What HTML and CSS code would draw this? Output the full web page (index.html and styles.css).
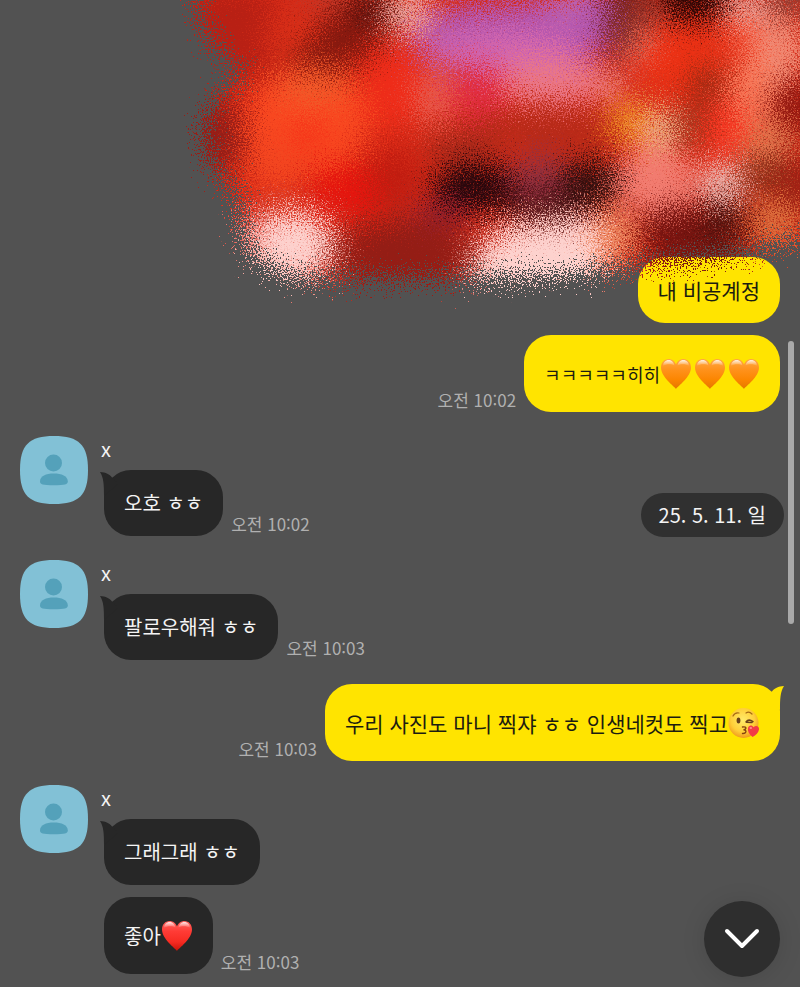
FILE: index.html
```html
<!DOCTYPE html>
<html lang="ko">
<head>
<meta charset="utf-8">
<meta name="viewport" content="width=device-width, initial-scale=1">
<title>채팅</title>
<link rel="stylesheet" href="styles.css">
</head>
<body>
<svg class="defs" aria-hidden="true">
  <defs>
    <linearGradient id="orange" x1="0" y1="0" x2="0" y2="1"><stop offset="0" stop-color="#ffa844"/><stop offset=".35" stop-color="#ff921c"/><stop offset=".7" stop-color="#fb8500"/><stop offset="1" stop-color="#e47800"/></linearGradient>
    <linearGradient id="red" x1="0" y1="0" x2="0" y2="1"><stop offset="0" stop-color="#ff6560"/><stop offset=".35" stop-color="#ff3b35"/><stop offset=".7" stop-color="#f72b22"/><stop offset="1" stop-color="#c91208"/></linearGradient>
    <linearGradient id="shine" x1="0" y1="0" x2="0" y2="1"><stop offset="0" stop-color="#fff" stop-opacity=".85"/><stop offset="1" stop-color="#fff" stop-opacity="0"/></linearGradient>
    <radialGradient id="face" cx=".48" cy=".4" r=".6"><stop offset="0" stop-color="#ffeb6b"/><stop offset=".65" stop-color="#ffcf38"/><stop offset="1" stop-color="#f19a1c"/></radialGradient>
    <symbol id="avatar" viewBox="0 0 68 68">
      <path fill="#82c1d6" d="M34 0C59 0 68 9 68 34S59 68 34 68 0 59 0 34 9 0 34 0Z"/>
      <circle cx="33.500" cy="27" r="8.500" fill="#54a1ba"/>
      <path fill="#54a1ba" d="M20 45.500C20 40 26 37.500 33.800 37.500S47.800 40 47.800 45.500C47.800 48.500 45 49.200 33.800 49.200S20 48.500 20 45.500Z"/>
    </symbol>
    <symbol id="heart-shape" viewBox="0 0 32 32">
      <path d="M16 31C14 28 1 19 1 9.500C1 4.500 4.300 1 8.500 1C12 1 14.800 3.200 16 6.500C17.200 3.200 20 1 23.500 1C27.700 1 31 4.500 31 9.500C31 19 18 28 16 31Z"/>
    </symbol>
    <symbol id="heart-shine" viewBox="0 0 32 32">
      <path fill="url(#shine)" d="M3 8C3 4.500 5.500 2 8.700 2S14 4.500 14.500 7.500C11 5.500 6 6 3 8Z"/>
      <path fill="url(#shine)" d="M29 8C29 4.500 26.500 2 23.300 2S18 4.500 17.500 7.500C21 5.500 26 6 29 8Z"/>
    </symbol>
    <symbol id="tail" viewBox="0 0 18 24">
      <path d="M0 0C6 .4 9.500 2.200 12 5.500L18 12 4 24C4 13 3.800 6 0 0Z"/>
    </symbol>
  </defs>
</svg>

<main class="chat">
  <div class="photo">
    <svg class="scribble" viewBox="180 0 620 310" role="img" aria-label="가려진 사진">
      <defs>
        <filter id="grain" filterUnits="userSpaceOnUse" x="130" y="-50" width="720" height="380" color-interpolation-filters="sRGB">
          <feTurbulence type="fractalNoise" baseFrequency=".71" numOctaves="3" seed="7" result="noise"/>
          <feDisplacementMap in="SourceGraphic" in2="noise" scale="84" xChannelSelector="R" yChannelSelector="G"/>
          <feGaussianBlur stdDeviation=".4"/>
        </filter>
        <filter id="soft" filterUnits="userSpaceOnUse" x="100" y="-80" width="780" height="460" color-interpolation-filters="sRGB"><feGaussianBlur stdDeviation="10"/></filter>
        <clipPath id="outline"><path d="M195-40L199 12Q207 48 247 73Q212 92 203 132Q205 168 240 196L244 235Q250 262 292 276Q310 281 350 277L460 278Q560 276 625 267Q700 258 735 254L850 226V-40Z"/></clipPath>
      </defs>
      <g filter="url(#grain)">
        <g clip-path="url(#outline)">
          <path fill="#d62a17" d="M100-60H880V340H100Z"/>
          <g filter="url(#soft)">
            <ellipse cx="232" cy="35" rx="55" ry="50" fill="#b82014"/>
            <ellipse cx="292" cy="38" rx="26" ry="24" fill="#dc3018"/>
            <ellipse cx="330" cy="-5" rx="30" ry="16" fill="#c23828"/>
            <path d="M285 65L340 5 380-20 400 0 390 40 340 72Z" fill="#86190f"/>
            <ellipse cx="370" cy="7" rx="17" ry="14" fill="#4a0b08"/>
            <ellipse cx="408" cy="13" rx="24" ry="21" fill="#f1a79e"/>
            <ellipse cx="215" cy="137" rx="28" ry="42" fill="#951e17"/>
            <ellipse cx="308" cy="120" rx="62" ry="52" fill="#f84820"/>
            <ellipse cx="315" cy="87" rx="40" ry="15" fill="#f25c2a"/>
            <ellipse cx="276" cy="165" rx="32" ry="24" fill="#f34620"/>
            <ellipse cx="308" cy="135" rx="18" ry="12" fill="#f52e16"/>
            <ellipse cx="392" cy="85" rx="30" ry="44" fill="#ee2c19"/>
            <ellipse cx="350" cy="190" rx="38" ry="25" fill="#e5150e"/>
            <ellipse cx="393" cy="178" rx="24" ry="30" fill="#bf1c10"/>
            <ellipse cx="434" cy="98" rx="20" ry="28" fill="#e85a4c"/>
            <path d="M410 45Q435-5 500 4L615-15 611 45 560 75 438 68Z" fill="#b054ae"/>
            <ellipse cx="505" cy="50" rx="80" ry="19" fill="#d266ae"/>
            <ellipse cx="552" cy="82" rx="65" ry="21" fill="#eb7886"/>
            <ellipse cx="478" cy="93" rx="27" ry="26" fill="#e12c40"/>
            <ellipse cx="568" cy="6" rx="20" ry="7" fill="#cd7aba"/>
            <path d="M610-30H655L640 28 620 64 606 50Z" fill="#77201a"/>
            <ellipse cx="648" cy="15" rx="18" ry="13" fill="#a64035"/>
            <ellipse cx="694" cy="-2" rx="32" ry="23" fill="#280504"/>
            <ellipse cx="747" cy="9" rx="22" ry="17" fill="#edafa7"/>
            <ellipse cx="790" cy="-2" rx="24" ry="18" fill="#8e3c32"/>
            <ellipse cx="682" cy="60" rx="43" ry="36" fill="#ec3114"/>
            <ellipse cx="640" cy="47" rx="13" ry="14" fill="#ed8170"/>
            <ellipse cx="612" cy="86" rx="16" ry="12" fill="#ee8980"/>
            <ellipse cx="745" cy="38" rx="22" ry="18" fill="#f24e32"/>
            <ellipse cx="780" cy="52" rx="26" ry="35" fill="#f18a74"/>
            <ellipse cx="753" cy="91" rx="24" ry="32" fill="#f87a5a"/>
            <ellipse cx="706" cy="84" rx="18" ry="19" fill="#9b2a12"/>
            <ellipse cx="796" cy="108" rx="26" ry="30" fill="#93170f"/>
            <ellipse cx="555" cy="129" rx="85" ry="19" fill="#b52a18"/>
            <ellipse cx="460" cy="145" rx="37" ry="14" fill="#a6291a"/>
            <ellipse cx="630" cy="122" rx="22" ry="19" fill="#ee8a20"/>
            <ellipse cx="660" cy="130" rx="19" ry="22" fill="#f0b088"/>
            <ellipse cx="692" cy="127" rx="17" ry="20" fill="#9b3018"/>
            <ellipse cx="725" cy="130" rx="21" ry="28" fill="#f53520"/>
            <ellipse cx="768" cy="143" rx="27" ry="22" fill="#e87a50"/>
            <ellipse cx="475" cy="187" rx="44" ry="24" fill="#26070c"/>
            <ellipse cx="540" cy="181" rx="30" ry="28" fill="#93303e"/>
            <ellipse cx="590" cy="183" rx="30" ry="24" fill="#300f0e"/>
            <ellipse cx="540" cy="206" rx="45" ry="10" fill="#36070b"/>
            <ellipse cx="655" cy="181" rx="40" ry="34" fill="#f27c70"/>
            <ellipse cx="722" cy="184" rx="23" ry="22" fill="#edbab4"/>
            <ellipse cx="765" cy="175" rx="24" ry="21" fill="#8d3018"/>
            <ellipse cx="800" cy="188" rx="24" ry="35" fill="#9e2014"/>
            <ellipse cx="440" cy="213" rx="30" ry="8" fill="#92213c"/>
            <ellipse cx="405" cy="255" rx="75" ry="38" fill="#941d15"/>
            <ellipse cx="258" cy="229" rx="22" ry="16" fill="#e17770"/>
            <ellipse cx="293" cy="246" rx="41" ry="36" fill="#fdd1cd"/>
            <path d="M472 262Q490 221 525 223L597 215 607 290 470 292Z" fill="#fdd2ce"/>
            <ellipse cx="615" cy="236" rx="19" ry="27" fill="#ee8a60"/>
            <ellipse cx="690" cy="233" rx="53" ry="27" fill="#75130f"/>
            <ellipse cx="725" cy="222" rx="24" ry="19" fill="#4c100b"/>
            <ellipse cx="775" cy="222" rx="26" ry="20" fill="#df7540"/>
            <path d="M625 270L700 252 760 246 750 280H625Z" fill="#87251a"/>
          </g>
        </g>
      </g>
    </svg>
  </div>

  <section class="group mine">
    <div class="row"><p class="bubble">내 비공계정</p></div>
    <div class="row">
      <time>오전 10:02</time>
      <p class="bubble tall small"><span>ㅋㅋㅋㅋㅋ히히</span><span class="emojis" role="img" aria-label="주황색 하트 세 개">
        <svg viewBox="0 0 32 32"><use href="#heart-shape" fill="url(#orange)"/><use href="#heart-shine"/></svg>
        <svg viewBox="0 0 32 32"><use href="#heart-shape" fill="url(#orange)"/><use href="#heart-shine"/></svg>
        <svg viewBox="0 0 32 32"><use href="#heart-shape" fill="url(#orange)"/><use href="#heart-shine"/></svg></span></p>
    </div>
  </section>

  <section class="group theirs">
    <svg class="avatar" aria-hidden="true"><use href="#avatar"/></svg>
    <div class="thread">
      <h2>x</h2>
      <div class="row"><p class="bubble">오호 ㅎㅎ<svg class="tail" aria-hidden="true"><use href="#tail"/></svg></p><time>오전 10:02</time></div>
    </div>
  </section>

  <section class="group theirs">
    <svg class="avatar" aria-hidden="true"><use href="#avatar"/></svg>
    <div class="thread">
      <h2>x</h2>
      <div class="row"><p class="bubble">팔로우해줘 ㅎㅎ<svg class="tail" aria-hidden="true"><use href="#tail"/></svg></p><time>오전 10:03</time></div>
    </div>
  </section>

  <section class="group mine">
    <div class="row">
      <time>오전 10:03</time>
      <p class="bubble tall"><span>우리 사진도 마니 찍쟈 ㅎㅎ 인생네컷도 찍고</span><span class="emojis" role="img" aria-label="키스를 보내는 얼굴">
        <svg viewBox="0 0 32 32">
          <circle cx="15.500" cy="16" r="15" fill="url(#face)"/>
          <path d="M5 9Q7 5 11 6M18 6Q21 4 24 7" fill="none" stroke="#a66a14" stroke-width="1.200" stroke-linecap="round"/>
          <ellipse cx="10.500" cy="13.500" rx="1.900" ry="2.900" fill="#68401a"/>
          <path d="M18 15Q20.500 11.500 25 14.500M18.500 15.200L24 15.500" fill="none" stroke="#68401a" stroke-width="1.500" stroke-linecap="round"/>
          <path d="M14.500 20Q18.500 19.500 17.800 21.500Q17.400 22.600 15.500 22.800Q18.500 23 17.800 25Q17.200 26.700 14.500 26.500" fill="none" stroke="#85430f" stroke-width="1.400" stroke-linecap="round"/>
          <path d="M24.500 30C21 27 19.300 24 20 21C20.700 18 24 17.600 25.500 20.200C28 17.700 31.500 19.300 31 22.500C30.500 25.500 28 28.500 24.500 30Z" fill="#f23c45"/>
          <ellipse cx="22.800" cy="21" rx="1.300" ry=".9" fill="#ff8b8d"/>
        </svg></span><svg class="tail" aria-hidden="true"><use href="#tail"/></svg></p>
    </div>
  </section>

  <section class="group theirs">
    <svg class="avatar" aria-hidden="true"><use href="#avatar"/></svg>
    <div class="thread">
      <h2>x</h2>
      <div class="row"><p class="bubble">그래그래 ㅎㅎ<svg class="tail" aria-hidden="true"><use href="#tail"/></svg></p></div>
      <div class="row">
        <p class="bubble tall"><span>좋아</span><span class="emojis" role="img" aria-label="빨간 하트"><svg viewBox="0 0 32 32"><use href="#heart-shape" fill="url(#red)"/><use href="#heart-shine"/></svg></span></p>
        <time>오전 10:03</time>
      </div>
    </div>
  </section>

  <div class="date">25. 5. 11. 일</div>
  <div class="scrollbar" aria-hidden="true"></div>
  <button class="down" type="button" aria-label="맨 아래로">
    <svg viewBox="0 0 36 22" aria-hidden="true"><path d="M3 3L18 18 33 3"/></svg>
  </button>
</main>
</body>
</html>
```
FILE: styles.css
```css
* {
  box-sizing: border-box;
}

body {
  margin: 0;
  background: #525252;
  color: #f4f4f4;
  font-family: "Noto Sans CJK KR", sans-serif;
}

h2,
p {
  margin: 0;
}

.defs {
  position: absolute;
  width: 0;
  height: 0;
}

.chat {
  position: relative;
  display: flex;
  flex-direction: column;
  gap: 24px;
  min-height: 100vh;
  padding: 0 20px 13px;
  overflow: hidden;
}

.photo {
  height: 257px;
  margin-bottom: -24px;
}

.scribble {
  position: absolute;
  z-index: 1;
  top: 0;
  right: 0;
  width: 620px;
  height: 310px;
  pointer-events: none;
}

.group,
.thread {
  display: flex;
  flex-direction: column;
  gap: 12px;
}

.theirs {
  flex-direction: row;
  gap: 16px;
}

.avatar {
  flex: none;
  width: 68px;
  height: 68px;
}

h2 {
  height: 22px;
  margin-left: -3px;
  font-size: 20px;
  font-weight: 400;
  line-height: 26px;
}

.row {
  display: flex;
  align-items: flex-end;
  gap: 8px;
}

.mine .row {
  justify-content: flex-end;
}

.bubble {
  position: relative;
  display: flex;
  align-items: center;
  min-height: 66px;
  padding: 0 20px;
  border-radius: 27px;
  background: #272727;
  font-size: 20px;
  line-height: 28px;
}

.mine .bubble {
  background: #ffe400;
  color: #1c1c10;
  font-size: 21px;
}

.bubble.tall {
  min-height: 77px;
}

.mine .bubble.small {
  font-size: 18px;
}

.emojis {
  display: flex;
  gap: 2px;
}

.emojis svg {
  width: 32px;
  height: 32px;
}

.tail {
  position: absolute;
  top: 2px;
  left: -4px;
  width: 18px;
  height: 24px;
  fill: #272727;
}

.mine .tail {
  right: -4px;
  left: auto;
  fill: #ffe400;
  transform: scaleX(-1);
}

time {
  color: #b0b0b0;
  font-size: 17px;
  line-height: 24px;
  white-space: nowrap;
}

.date {
  position: absolute;
  top: 493px;
  right: 16px;
  padding: 0 18px;
  border-radius: 22px;
  background: #303030;
  font-size: 20px;
  line-height: 44px;
}

.scrollbar {
  position: absolute;
  top: 341px;
  right: 6px;
  width: 6px;
  height: 283px;
  border-radius: 3px;
  background: #a9a9a9;
}

.down {
  position: absolute;
  right: 20px;
  bottom: 10px;
  display: grid;
  place-items: center;
  width: 76px;
  height: 76px;
  padding: 0;
  border: 0;
  border-radius: 50%;
  background: #2e2e2e;
  box-shadow: 0 2px 24px rgba(0, 0, 0, 0.12);
}

.down svg {
  width: 36px;
  height: 22px;
  fill: none;
  stroke: #fff;
  stroke-width: 4;
  stroke-linecap: round;
  stroke-linejoin: round;
}
```
